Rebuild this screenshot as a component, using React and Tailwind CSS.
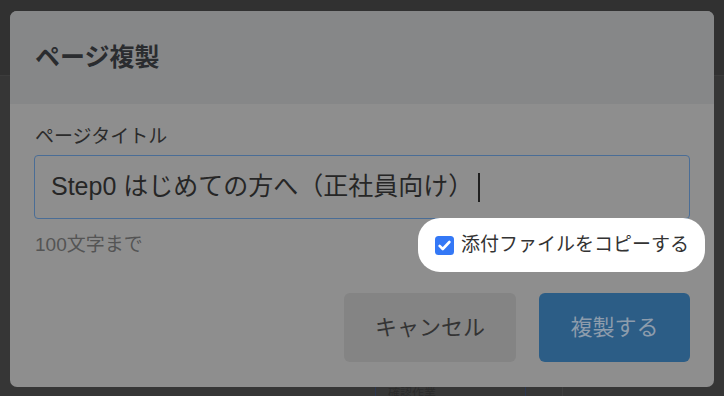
import React from "react";

const font = "font-['Liberation_Sans','Noto_Sans_CJK_JP',sans-serif]";

function CheckIcon() {
    return (
        <svg width="19" height="19" viewBox="0 0 19 19" className="shrink-0">
            <rect width="19" height="19" rx="3.5" fill="#3478f6" />
            <path
                d="M4.6 9.8l3.2 3.2 6.6-7"
                fill="none"
                stroke="#fff"
                strokeWidth="2.6"
                strokeLinecap="round"
                strokeLinejoin="round"
            />
        </svg>
    );
}

export default function App() {
    return (
        <div className={`relative w-full h-[396px] overflow-hidden bg-[#363636] ${font}`}>
            {/* page behind the overlay */}
            <div className="h-[76px] bg-[#313131] border-b border-[#3c3c3c]" />
            <div className="flex pl-[375px] pt-[306px]">
                <div className="w-[151px] h-[40px] rounded-md border border-[#2b3852] px-3 pt-[2px] text-[12px] text-[#2a2a2a]">
                    確認作業
                </div>
                <div className="ml-[36px] w-px h-[40px] bg-[#3e3e3e]" />
            </div>

            {/* modal */}
            <div className="absolute inset-0 flex justify-center pt-[11px]">
                <div className="w-[704px] h-[376px] rounded-[7px] overflow-hidden bg-[#8e8e8e] flex flex-col">
                    <div className="h-[93px] shrink-0 bg-[#868788] flex items-center px-[25px]">
                        <h2 className="text-[25px] font-bold text-[#2a2c2f] leading-none">
                            ページ複製
                        </h2>
                    </div>

                    <div className="px-[24px] pt-[20px] pb-[25px]">
                        <label className="block pl-[1px] text-[19px] leading-[26px] text-[#2b2b2b]">
                            ページタイトル
                        </label>
                        <div className="mt-[5px] h-[64px] rounded-[4px] border border-[#4a6d96] flex items-center px-[16px]">
                            <span className="text-[25px] text-[#262626] whitespace-nowrap">
                                Step0 はじめての方へ（正社員向け）
                            </span>
                            <span className="ml-[5px] w-[2px] h-[29px] bg-[#1f1f1f]" />
                        </div>

                        <div className="-mt-px flex items-center justify-between">
                            <span className="pl-[1px] text-[19px] text-[#545454]">100文字まで</span>
                            <div className="-mr-[15px] h-[54px] rounded-[22px] bg-white flex items-center gap-[7px] pl-[17px] pr-[16px]">
                                <CheckIcon />
                                <span className="text-[19px] text-[#333] whitespace-nowrap">
                                    添付ファイルをコピーする
                                </span>
                            </div>
                        </div>

                        <div className="mt-[21px] flex justify-end gap-[23px]">
                            <button className="w-[172px] h-[69px] rounded-[6px] bg-[#848484] text-[22px] text-[#343434]">
                                キャンセル
                            </button>
                            <button className="w-[151px] h-[69px] rounded-[6px] bg-[#2c5d86] text-[22px] text-[#8d9cac]">
                                複製する
                            </button>
                        </div>
                    </div>
                </div>
            </div>
        </div>
    );
}
